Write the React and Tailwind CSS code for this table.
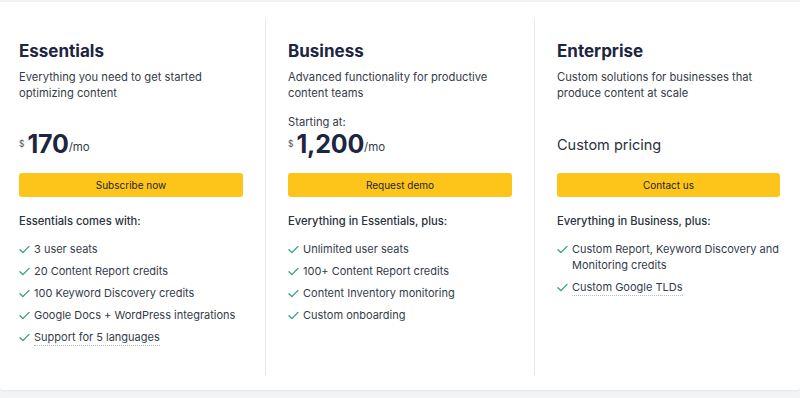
const plans = [
  {
    name: 'Essentials',
    desc: 'Everything you need to get started optimizing content',
    price: '170',
    cta: 'Subscribe now',
    listTitle: 'Essentials comes with:',
    items: [
      { text: '3 user seats' },
      { text: '20 Content Report credits' },
      { text: '100 Keyword Discovery credits' },
      { text: 'Google Docs + WordPress integrations' },
      { text: 'Support for 5 languages', dotted: true },
    ],
  },
  {
    name: 'Business',
    desc: 'Advanced functionality for productive content teams',
    starting: true,
    price: '1,200',
    cta: 'Request demo',
    listTitle: 'Everything in Essentials, plus:',
    items: [
      { text: 'Unlimited user seats' },
      { text: '100+ Content Report credits' },
      { text: 'Content Inventory monitoring' },
      { text: 'Custom onboarding' },
    ],
  },
  {
    name: 'Enterprise',
    desc: 'Custom solutions for businesses that produce content at scale',
    custom: true,
    cta: 'Contact us',
    listTitle: 'Everything in Business, plus:',
    items: [
      { text: 'Custom Report, Keyword Discovery and Monitoring credits' },
      { text: 'Custom Google TLDs', dotted: true },
    ],
  },
]

function Check() {
  return (
    <svg width="11" height="9" viewBox="0 0 11 9" fill="none" className="mt-[4px] shrink-0">
      <path d="M1 4.8 L3.9 7.6 L10 1.4" stroke="#2f9e77" strokeWidth="1.3" strokeLinecap="round" strokeLinejoin="round" />
    </svg>
  )
}

function PlanColumn({ plan }) {
  return (
    <div className="flex flex-col">
      <h3 className="text-[17px] font-bold leading-[22px] text-[#1c2541]">{plan.name}</h3>
      <p className="mt-[7px] h-[33px] text-[11.2px] leading-[16px] text-[#353c4a]">{plan.desc}</p>

      <div className="mt-[16px] flex h-[40px] flex-col justify-end">
        {plan.custom ? (
          <p className="mb-[2px] text-[14.5px] leading-[22px] text-[#2a3140]">Custom pricing</p>
        ) : (
          <>
            {plan.starting && (
              <p className="text-[11.2px] leading-[15px] text-[#353c4a]">Starting at:</p>
            )}
            <div className="flex items-end text-[#1c2541]">
              <span className="mb-[10px] mr-[3px] text-[8.5px] leading-none text-[#4b5260]">$</span>
              <span className="text-[25px] font-bold leading-[28px] tracking-[-0.2px]">{plan.price}</span>
              <span className="mb-[4px] text-[11.5px] leading-[14px] text-[#353c4a]">/mo</span>
            </div>
          </>
        )}
      </div>

      <button className="mt-[15px] h-[24px] w-full rounded-[3px] bg-[#fdc51a] text-[10px] text-[#1f2430]">
        {plan.cta}
      </button>

      <p className="mt-[16px] text-[11.2px] font-medium leading-[16px] text-[#2a3140]">{plan.listTitle}</p>

      <ul className="mt-[12px] flex flex-col gap-[6px]">
        {plan.items.map((item) => (
          <li key={item.text} className="flex gap-[4px] text-[11px] leading-[16px] text-[#353c4a]">
            <Check />
            <span>
              <span className={item.dotted ? 'border-b border-dotted border-[#b9bec7] pb-[1px]' : ''}>
                {item.text}
              </span>
            </span>
          </li>
        ))}
      </ul>
    </div>
  )
}

export default function App() {
  return (
    <div
      className="h-[398px] w-[800px] bg-[#f3f4f6] pt-[2px]"
      style={{ fontFamily: 'Inter, "Noto Sans", sans-serif' }}
    >
      <div className="h-[388px] rounded-b-[3px] bg-white shadow-[0_1px_3px_rgba(0,0,0,0.06)]">
        <div className="grid grid-cols-[266px_269px_1fr] pt-[16px]">
          <div className="h-[357px] border-r border-[#e5e7eb] pl-[19px] pr-[22px] pt-[22px]">
            <PlanColumn plan={plans[0]} />
          </div>
          <div className="h-[357px] border-r border-[#e5e7eb] pl-[22px] pr-[22px] pt-[22px]">
            <PlanColumn plan={plans[1]} />
          </div>
          <div className="pl-[22px] pr-[20px] pt-[22px]">
            <PlanColumn plan={plans[2]} />
          </div>
        </div>
      </div>
    </div>
  )
}
